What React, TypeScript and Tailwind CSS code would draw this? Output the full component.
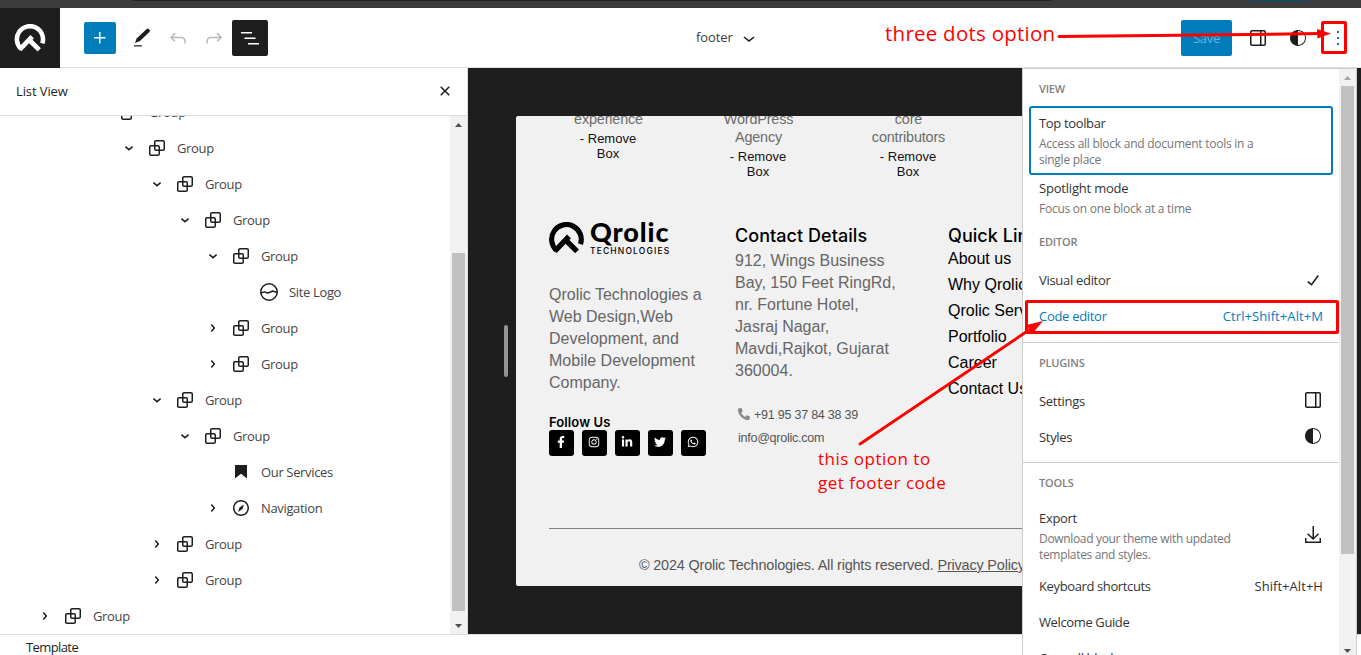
import React from 'react';
import { FaFacebookF, FaInstagram, FaLinkedinIn, FaPhoneAlt, FaTwitter, FaWhatsapp } from 'react-icons/fa';

const paths = {
  group:
    'M18 4h-7c-1.1 0-2 .9-2 2v3H6c-1.1 0-2 .9-2 2v7c0 1.1.9 2 2 2h7c1.1 0 2-.9 2-2v-3h3c1.1 0 2-.9 2-2V6c0-1.1-.9-2-2-2zm-4.5 14c0 .3-.2.5-.5.5H6c-.3 0-.5-.2-.5-.5v-7c0-.3.2-.5.5-.5h3V13c0 1.1.9 2 2 2h2.5v3zm0-4.5H11c-.3 0-.5-.2-.5-.5v-2.5H13c.3 0 .5.2.5.5v2.5zm5-.5c0 .3-.2.5-.5.5h-3V11c0-1.1-.9-2-2-2h-2.5V6c0-.3.2-.5.5-.5h7c.3 0 .5.2.5.5v7z',
  chevronDown: 'M17.5 11.6L12 16l-5.5-4.4.9-1.2L12 14l4.5-3.6 1 1.2z',
  chevronRight:
    'M10.8622 8.04053L14.2805 12.0286L10.8622 16.0167L9.72327 15.0405L12.3049 12.0286L9.72327 9.01672L10.8622 8.04053Z',
  plus: 'M11 12.5V17.5H12.5V12.5H17.5V11H12.5V6H11V11H6V12.5H11Z',
  edit: 'm20.2 4.9-2.3-2.2-9.6 9.8-1.3 4.1 4-1.4L20.2 4.9Zm-6.2 14.1H6v1.6h8V19Z',
  undo: 'M18.3 11.7c-.6-.6-1.4-.9-2.3-.9H6.7l2.9-3.3-1.1-1-4.5 5L8.5 16l1-1-2.7-2.7H16c.5 0 .9.2 1.3.5 1 1 1 3.4 1 4.5v.3h1.5v-.2c0-1.5 0-4.3-1.5-5.7z',
  redo: 'M15.6 6.5l-1.1 1 2.9 3.3H8c-.9 0-1.7.3-2.3.9-1.4 1.5-1.4 4.2-1.4 5.6v.2h1.5v-.3c0-1.1 0-3.5 1-4.5.3-.3.7-.5 1.3-.5h9.2L14.5 15l1.1 1.1 4.6-4.6-4.6-5z',
  listView: 'M3 6h11v1.5H3V6Zm3.5 5.5h11V13h-11v-1.5ZM21 17H10v1.5h11V17Z',
  close:
    'M12 13.06l3.712 3.713 1.061-1.06L13.061 12l3.712-3.712-1.06-1.06L12 10.938 8.288 7.227l-1.061 1.06L10.939 12l-3.712 3.712 1.06 1.061L12 13.061z',
  drawer:
    'M18 4H6c-1.1 0-2 .9-2 2v12c0 1.1.9 2 2 2h12c1.1 0 2-.9 2-2V6c0-1.1-.9-2-2-2zm-4 14.5H6c-.3 0-.5-.2-.5-.5V6c0-.3.2-.5.5-.5h8v13zm4.5-.5c0 .3-.2.5-.5.5h-2.5v-13H18c.3 0 .5.2.5.5v12z',
  styles: 'M12 4c-4.4 0-8 3.6-8 8v.1c0 4.1 3.2 7.5 7.2 7.9h.8c4.4 0 8-3.6 8-8s-3.6-8-8-8zm0 15V5c3.9 0 7 3.1 7 7s-3.1 7-7 7z',
  more: 'M13 19h-2v-2h2v2zm0-6h-2v-2h2v2zm0-6h-2V5h2v2z',
  check: 'M16.7 7.1l-6.3 8.5-3.3-2.5-.9 1.2 4.5 3.4L17.9 8z',
  download: 'M18 11.3l-1-1.1-4 4V3h-1.5v11.3L7 10.2l-1 1.1 6.2 5.8 5.8-5.8zm.5 3.7v3.5h-13V15H4v5h16v-5h-1.5z',
  navigation:
    'M12 4c-4.4 0-8 3.6-8 8s3.6 8 8 8 8-3.6 8-8-3.6-8-8-8zm0 14.5c-3.6 0-6.5-2.9-6.5-6.5S8.4 5.5 12 5.5s6.5 2.9 6.5 6.5-2.9 6.5-6.5 6.5zM9 16l4.5-3L15 8.4l-4.5 3L9 16z',
  bookmark: 'M6 5V18.5911L12 13.8473L18 18.5911V5H6Z',
};

type IconName = keyof typeof paths;

function Icon({ name, className = '' }: { name: IconName; className?: string }) {
  return (
    <svg viewBox="0 0 24 24" width="24" height="24" fill="currentColor" className={`shrink-0 ${className}`}>
      <path d={paths[name]} />
    </svg>
  );
}

function SiteLogoIcon() {
  return (
    <svg viewBox="0 0 24 24" width="24" height="24" fill="none" stroke="currentColor" strokeWidth="1.5" className="shrink-0">
      <circle cx="12" cy="12" r="8.25" />
      <path d="M4 13 L7.4 11.9 L10.6 13 L13.6 12 L15.8 11 L20 12.6" strokeLinejoin="round" />
    </svg>
  );
}

function QrolicMark({ className }: { className: string }) {
  return (
    <svg viewBox="1 1 34 32" fill="none" stroke="currentColor" className={className}>
      <path d="M8.2 28.4 A14.4 14.4 0 1 1 31.6 22.4" strokeWidth="5" />
      <path d="M6.6 29.4 L20.4 15" strokeWidth="5.2" />
      <path d="M17 18.4 L28.2 29.6" strokeWidth="5.2" />
    </svg>
  );
}

type Row = { level: number; label: string; icon: IconName | 'siteLogo'; open?: boolean };

const rows: Row[] = [
  { level: 2, label: 'Group', icon: 'group', open: true },
  { level: 3, label: 'Group', icon: 'group', open: true },
  { level: 4, label: 'Group', icon: 'group', open: true },
  { level: 5, label: 'Group', icon: 'group', open: true },
  { level: 6, label: 'Group', icon: 'group', open: true },
  { level: 7, label: 'Site Logo', icon: 'siteLogo' },
  { level: 6, label: 'Group', icon: 'group', open: false },
  { level: 6, label: 'Group', icon: 'group', open: false },
  { level: 4, label: 'Group', icon: 'group', open: true },
  { level: 5, label: 'Group', icon: 'group', open: true },
  { level: 6, label: 'Our Services', icon: 'bookmark' },
  { level: 6, label: 'Navigation', icon: 'navigation', open: false },
  { level: 4, label: 'Group', icon: 'group', open: false },
  { level: 4, label: 'Group', icon: 'group', open: false },
  { level: 0, label: 'Group', icon: 'group', open: false },
];

function TreeRow({ row }: { row: Row }) {
  return (
    <div className="flex h-9 shrink-0 items-center" style={{ paddingLeft: 33 + row.level * 28 }}>
      <span className="flex w-7 shrink-0">
        {row.open !== undefined &&
          (row.open ? (
            <svg viewBox="0 0 24 24" width="24" height="24" fill="none" stroke="currentColor" strokeWidth="1.6">
              <path d="M8.4 10.7 L12 13.6 L15.6 10.7" />
            </svg>
          ) : (
            <Icon name="chevronRight" />
          ))}
      </span>
      {row.icon === 'siteLogo' ? <SiteLogoIcon /> : <Icon name={row.icon} />}
      <span className="ml-2 pt-0.5 tracking-[-0.35px] text-[#444]">{row.label}</span>
    </div>
  );
}

function Arrow({ up = false, color }: { up?: boolean; color: string }) {
  return (
    <svg viewBox="0 0 7 4" width="7" height="4" fill={color} className="shrink-0">
      <path d={up ? 'M3.5 0 L7 4 H0 Z' : 'M0 0 H7 L3.5 4 Z'} />
    </svg>
  );
}

function Header() {
  return (
    <header className="flex h-[60px] shrink-0 items-center border-b border-[#e0e0e0] bg-white">
      <div className="-mb-px flex h-[60px] w-[60px] items-center justify-center bg-[#1e1e1e] text-white">
        <QrolicMark className="h-[29px] w-8" />
      </div>
      <div className="ml-6 flex h-8 w-8 items-center justify-center rounded-[2px] bg-[#007cba] text-white">
        <Icon name="plus" />
      </div>
      <div className="ml-3.5 flex flex-1 items-center">
        <svg viewBox="0 0 24 24" width="24" height="24" fill="currentColor" className="shrink-0">
          <path d="M16.7 2.9 L18.2 2.5 L20 4.3 L19.6 5.8 L10 15 L5 17 L6.6 12.6 Z" />
          <path d="M4 19 H12 V20.6 H4 Z" fill="#555" />
        </svg>
        <Icon name="undo" className="ml-3 text-[#b8b8b8]" />
        <Icon name="redo" className="ml-3 text-[#b8b8b8]" />
        <div className="ml-1.5 flex h-9 w-9 items-center justify-center rounded-[2px] bg-[#1e1e1e] text-white">
          <Icon name="listView" />
        </div>
      </div>
      <div className="flex w-[485px] items-center">
        <span className="text-[13px] tracking-[-0.1px] text-[#3a3a3a]">footer</span>
        <Icon name="chevronDown" className="ml-1" />
      </div>
      <div className="flex items-center pr-[11px]">
        <div className="flex h-9 w-[51px] items-center justify-center rounded-[2px] bg-[#007cba] pt-0.5 text-[13px] text-[#6cb4da]">
          Save
        </div>
        <Icon name="drawer" className="ml-3.5" />
        <Icon name="styles" className="ml-4" />
        <Icon name="more" className="ml-4 text-[#007cba]" />
      </div>
    </header>
  );
}

function ListView() {
  return (
    <aside className="flex w-[468px] shrink-0 flex-col border-r border-[#ddd] bg-white">
      <div className="flex h-12 shrink-0 items-center justify-between border-b border-[#ddd] pr-2.5 pl-4">
        <span className="tracking-[-0.1px] text-[#1e1e1e]">List View</span>
        <Icon name="close" className="-mt-px" />
      </div>
      <div className="flex min-h-0 flex-1">
        <div className="flex-1 overflow-hidden">
          <div className="-mt-[22px] flex flex-col">
            {rows.map((row, i) => (
              <TreeRow key={i} row={row} />
            ))}
          </div>
        </div>
        <div className="flex w-[17px] flex-col items-center bg-[#f1f1f1]">
          <div className="flex h-[17px] items-center">
            <Arrow up color="#505050" />
          </div>
          <div className="mt-[120px] h-[358px] w-[13px] bg-[#c1c1c1]" />
          <div className="mt-auto flex h-[17px] items-center">
            <Arrow color="#505050" />
          </div>
        </div>
      </div>
    </aside>
  );
}

function RemoveBox({ lines }: { lines: string[] }) {
  return (
    <div className="w-[150px] text-center">
      <div className="text-[14.4px] leading-[18px] tracking-[-0.16px] text-[#6b6b6b]">
        {lines.map((l) => (
          <div key={l}>{l}</div>
        ))}
      </div>
      <div className="mt-[3px] pr-px text-[13px] leading-[15px] text-[#111]">
        - Remove
        <br />
        Box
      </div>
    </div>
  );
}

const socials = [FaFacebookF, FaInstagram, FaLinkedinIn, FaTwitter, FaWhatsapp];

function FooterPage() {
  return (
    <div className="flex h-[470px] w-[640px] shrink-0 flex-col overflow-hidden rounded-[2px] bg-[#f1f1f1] font-['Liberation_Sans',sans-serif] tracking-normal">
      <div className="-mt-1.5 flex h-[106px] shrink-0 pl-[17.5px]">
        <RemoveBox lines={['experience']} />
        <RemoveBox lines={['WordPress', 'Agency']} />
        <RemoveBox lines={['core', 'contributors']} />
      </div>
      <div className="flex h-[312px] shrink-0 pl-[33px]">
        <div className="w-[186px]">
          <div className="mt-[5px] flex h-9 text-black">
            <QrolicMark className="mt-px h-[33px] w-[35px]" />
            <div className="ml-1.5">
              <div className="h-[26px] font-['Lato',sans-serif] text-[27px] leading-[22px] font-black tracking-[0.9px]">Qrolic</div>
              <div className="font-['Inter',sans-serif] text-[8.5px] leading-[9px] font-medium tracking-[1.15px]">TECHNOLOGIES</div>
            </div>
          </div>
          <div className="mt-[27px] text-base leading-[22px] text-[#666]">
            Qrolic Technologies a<br />
            Web Design,Web
            <br />
            Development, and
            <br />
            Mobile Development
            <br />
            Company.
          </div>
          <div className="mt-5 font-['Inter',sans-serif] text-[13px] leading-4 font-semibold tracking-[0.1px] text-black">Follow Us</div>
          <div className="flex gap-2">
            {socials.map((S, i) => (
              <div key={i} className="flex h-[26px] w-[25px] items-center justify-center rounded-[3px] bg-black pr-0.5 pb-0.5 text-white">
                <S size={12} />
              </div>
            ))}
          </div>
        </div>
        <div className="w-[213px]">
          <div className="mt-2 font-['Inter',sans-serif] text-[18px] leading-6 font-medium tracking-[0.05px] text-black">Contact Details</div>
          <div className="mt-0.5 text-base leading-[22px] text-[#666]">
            912, Wings Business
            <br />
            Bay, 150 Feet RingRd,
            <br />
            nr. Fortune Hotel,
            <br />
            Jasraj Nagar,
            <br />
            Mavdi,Rajkot, Gujarat
            <br />
            360004.
          </div>
          <div className="mt-[21px] flex h-[22px] items-center gap-1 pl-[3px] text-[13px] text-[#555]">
            <FaPhoneAlt size={12} className="-scale-x-100 rotate-90 text-[#888]" />
            <span className="pt-0.5 text-[12.5px] tracking-[-0.23px]">+91 95 37 84 38 39</span>
          </div>
          <div className="mt-px pl-[3px] text-[12.5px] leading-6 tracking-[-0.25px] text-[#555]">info@qrolic.com</div>
        </div>
        <div className="whitespace-nowrap">
          <div className="mt-2 font-['Inter',sans-serif] text-[18px] leading-6 font-medium tracking-[0.05px] text-black">Quick Links</div>
          <div className="-mt-0.5 text-base leading-[26px] text-black">
            {['About us', 'Why Qrolic', 'Qrolic Services', 'Portfolio', 'Career', 'Contact Us'].map((l) => (
              <div key={l}>{l}</div>
            ))}
          </div>
        </div>
      </div>
      <div className="ml-[33px] border-t border-[#808080]" />
      <div className="mt-[27px] ml-[123px] text-[14.4px] leading-[18px] tracking-[-0.16px] whitespace-nowrap text-[#555]">
        © 2024 Qrolic Technologies. All rights reserved. <span className="underline">Privacy Policy</span>
      </div>
    </div>
  );
}

function MenuHeading({ children }: { children: React.ReactNode }) {
  return <div className="h-4 px-4 text-[11px] leading-4 font-semibold tracking-[-0.2px] text-[#808080]">{children}</div>;
}

function MenuItem({ label, right, active }: { label: string; right?: React.ReactNode; active?: boolean }) {
  return (
    <div className={`flex h-9 items-center justify-between px-4 ${active ? 'text-[#007cba]' : 'text-[#333]'}`}>
      <span className="pt-0.5">{label}</span>
      {right}
    </div>
  );
}

function OptionsMenu() {
  return (
    <div className="absolute top-[68px] left-[1022px] flex h-[600px] w-[335px] border border-[#ccc] bg-white tracking-[-0.3px] text-[#333]">
      <div className="w-[316px] shrink-0 overflow-hidden">
        <div className="pt-3">
          <MenuHeading>VIEW</MenuHeading>
        </div>
        <div className="mt-[9px] ml-1.5 h-[69px] w-[304px] rounded-[3px] border-2 border-[#007cba] px-2 pt-[7px]">
          <div className="leading-4 tracking-[-0.35px]">Top toolbar</div>
          <div className="mt-[5px] text-xs leading-4 tracking-[-0.25px] text-[#757575]">
            Access all block and document tools in a<br />
            single place
          </div>
        </div>
        <div className="mt-[5px] px-4">
          <div className="leading-4 tracking-[-0.2px]">Spotlight mode</div>
          <div className="mt-[5px] text-xs leading-4 tracking-[-0.25px] text-[#757575]">Focus on one block at a time</div>
        </div>
        <div className="mt-[17px]">
          <MenuHeading>EDITOR</MenuHeading>
        </div>
        <div className="mt-3">
          <MenuItem label="Visual editor" right={<Icon name="check" className="-mr-0.5 text-[#1e1e1e]" />} />
          <MenuItem label="Code editor" right={<span className="pt-0.5 tracking-[0.08px]">Ctrl+Shift+Alt+M</span>} active />
        </div>
        <div className="mt-2 border-t border-[#ccc] pt-3">
          <MenuHeading>PLUGINS</MenuHeading>
          <div className="mt-3">
            <MenuItem label="Settings" right={<Icon name="drawer" className="-mt-0.5 -mr-0.5 text-[#1e1e1e]" />} />
            <MenuItem label="Styles" right={<Icon name="styles" className="-mt-0.5 -mr-0.5 text-[#1e1e1e]" />} />
          </div>
        </div>
        <div className="mt-[7px] border-t border-[#ccc] pt-3">
          <MenuHeading>TOOLS</MenuHeading>
        </div>
        <div className="mt-[19px] flex items-center justify-between px-4">
          <div>
            <div className="leading-4">Export</div>
            <div className="mt-[5px] text-xs leading-4 tracking-[-0.33px] text-[#757575]">
              Download your theme with updated
              <br />
              templates and styles.
            </div>
          </div>
          <Icon name="download" className="-mt-1 -mr-0.5 text-[#1e1e1e]" />
        </div>
        <div className="mt-[5px] tracking-[-0.38px]">
          <MenuItem label="Keyboard shortcuts" right={<span className="pt-0.5 tracking-[0.05px]">Shift+Alt+H</span>} />
          <MenuItem label="Welcome Guide" />
          <MenuItem label="Copy all blocks" />
        </div>
      </div>
      <div className="flex w-[17px] flex-col items-center bg-[#f1f1f1]">
        <div className="flex h-[17px] items-center">
          <Arrow up color="#a3a3a3" />
        </div>
        <div className="h-[468px] w-[13px] bg-[#c1c1c1]" />
        <div className="mt-[95px]">
          <Arrow color="#505050" />
        </div>
      </div>
    </div>
  );
}

function Annotations() {
  return (
    <div className="pointer-events-none absolute inset-0 font-['Open_Sans',sans-serif] text-[#ff0000]">
      <div className="absolute top-[21px] left-[1321px] h-[33px] w-[26px] rounded-[2px] border-3 border-[#ff0000]" />
      <div className="absolute top-[300px] left-[1025px] h-[34px] w-[314px] rounded-[2px] border-3 border-[#ff0000]" />
      <svg className="absolute inset-0" width="1361" height="655" fill="#ff0000" stroke="#ff0000">
        <path d="M1059 36.5 L1320 33.6" strokeWidth="3" strokeLinecap="round" />
        <path d="M1331 33.4 L1317 29 L1317.4 38.5 Z" stroke="none" />
        <path d="M860 444 L1032 328" strokeWidth="2.8" strokeLinecap="round" />
        <path d="M1043 321 L1026.5 325 L1032.5 333.5 Z" stroke="none" />
      </svg>
      <div className="absolute top-[19px] left-[885px] text-[20.5px] leading-7 tracking-[0.25px] whitespace-nowrap">three dots option</div>
      <div className="absolute top-[447px] left-[818px] text-[17px] leading-6 tracking-[0.5px] whitespace-nowrap">
        this option to
        <br />
        get footer code
      </div>
    </div>
  );
}

export default function App() {
  return (
    <div className="relative flex h-[655px] w-[1361px] flex-col overflow-hidden bg-white font-['Open_Sans',sans-serif] text-[13px] tracking-[-0.3px] text-[#1e1e1e]">
      <div className="flex h-2 shrink-0 bg-[#3c3c3c]">
        <div className="ml-[133px] h-px w-[919px] bg-[#242424]" />
        <div className="ml-[197px] h-px w-[60px] rounded-b bg-[#004a77]" />
      </div>
      <Header />
      <main className="flex h-[566px] shrink-0">
        <ListView />
        <section className="flex min-w-0 flex-1 items-center overflow-hidden bg-[#1e1e1e]">
          <div className="ml-9 h-[52px] w-1 shrink-0 rounded-full bg-[#949494]" />
          <div className="ml-2">
            <FooterPage />
          </div>
        </section>
      </main>
      <footer className="flex h-[21px] shrink-0 items-center border-t border-[#ddd] pt-1.5 pl-[26px] tracking-[-0.6px]">Template</footer>
      <OptionsMenu />
      <Annotations />
    </div>
  );
}
